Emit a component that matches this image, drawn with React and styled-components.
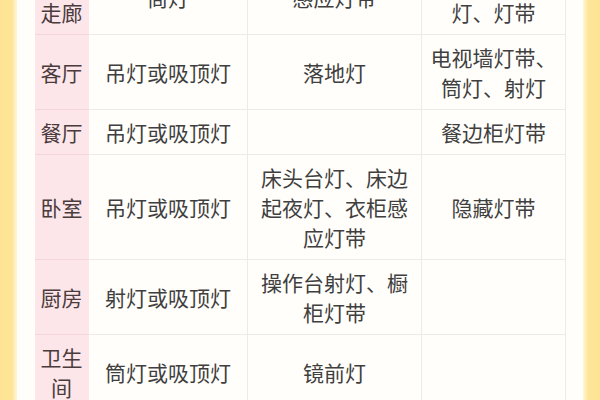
import React from 'react'
import styled, { createGlobalStyle } from 'styled-components'

const Global = createGlobalStyle`
  html, body {
    margin: 0;
    padding: 0;
    background: #fffefb;
  }
  body {
    font-family: "Noto Sans CJK SC", "Noto Sans", sans-serif;
  }
`

const Page = styled.div`
  display: flex;
  width: 600px;
  height: 400px;
  overflow: hidden;
  background: #fffefb;
`

const Strip = styled.div`
  flex: 0 0 17px;
  background: ${p => p.right
    ? 'linear-gradient(to right, #fff6dc, #fde598 30%, #fde494)'
    : 'linear-gradient(to left, #fff6dc, #fde598 30%, #fde494)'};
`

const Gutter = styled.div`
  flex: 0 0 ${p => p.w}px;
`

const Table = styled.div`
  display: grid;
  grid-template-columns: 54px 159px 174px 144px;
  align-content: start;
  margin-top: -40px;
`

const Cell = styled.div`
  display: flex;
  align-items: center;
  justify-content: center;
  text-align: center;
  padding: 7px ${p => (p.room ? 5 : 5)}px;
  font-size: 21px;
  line-height: 30px;
  color: ${p => (p.room ? '#4a3b3c' : '#3f3f3f')};
  background: ${p => (p.room ? '#fde6ea' : 'transparent')};
  border-bottom: 1px solid ${p => (p.room ? '#f6d6dc' : '#eeebe6')};
  border-right: 1px solid ${p => (p.room ? '#fde6ea' : '#eeebe6')};
  box-sizing: border-box;
`

const rows = [
  ['玄关走廊', '筒灯', '感应灯带', '筒灯、吸顶灯、灯带'],
  ['客厅', '吊灯或吸顶灯', '落地灯', '电视墙灯带、筒灯、射灯'],
  ['餐厅', '吊灯或吸顶灯', '', '餐边柜灯带'],
  ['卧室', '吊灯或吸顶灯', '床头台灯、床边起夜灯、衣柜感应灯带', '隐藏灯带'],
  ['厨房', '射灯或吸顶灯', '操作台射灯、橱柜灯带', ''],
  ['卫生间', '筒灯或吸顶灯', '镜前灯', ''],
]

export default function App() {
  return (
    <>
      <Global />
      <Page>
        <Strip />
        <Gutter w={18} />
        <Table>
          {rows.map((r, i) =>
            r.map((text, j) => (
              <Cell key={i + '-' + j} room={j === 0}>
                {text}
              </Cell>
            ))
          )}
        </Table>
        <Gutter w={17} />
        <Strip right />
      </Page>
    </>
  )
}
